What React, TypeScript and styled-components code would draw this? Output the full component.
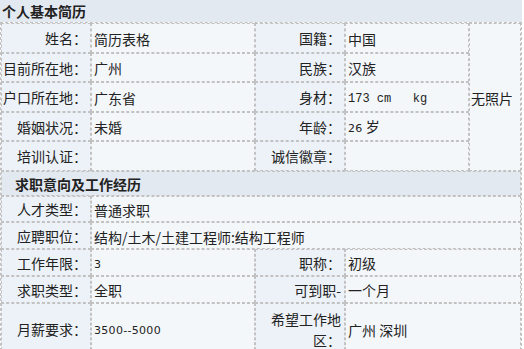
import styled, { createGlobalStyle } from 'styled-components'

const GlobalStyle = createGlobalStyle`
  html, body {
    margin: 0;
    padding: 0;
    background: #fff;
  }
  body {
    font-family: "Noto Sans CJK SC", "Noto Sans", sans-serif;
    font-size: 14px;
    color: #222;
  }
`

const LINE = '#c2c2c2'
const HEAD_BG = '#e3e9f1'
const LABEL_BG = '#edf2f8'
const VALUE_BG = '#f4f7fa'

const StyledPage = styled.div`
  width: 522px;
`
const StyledTitle = styled.div`
  height: 22px;
  line-height: 22px;
  padding-left: 2px;
  background: ${HEAD_BG};
  font-weight: bold;
`
const StyledSheet = styled.table`
  width: 522px;
  table-layout: fixed;
  border-collapse: separate;
  border-spacing: 0;
  border: 1px dashed ${LINE};
`
const StyledRow = styled.tr<{ $h: number }>`
  height: ${(p) => p.$h}px;
`
const StyledLabel = styled.td<{ $w?: number }>`
  box-sizing: border-box;
  width: ${(p) => (p.$w ? `${p.$w}px` : 'auto')};
  border: 1px dashed ${LINE};
  background: ${LABEL_BG};
  text-align: right;
  vertical-align: middle;
  padding: 2px 3px 0 0;
  line-height: 21px;
`
const StyledValue = styled.td<{ $w?: number }>`
  box-sizing: border-box;
  width: ${(p) => (p.$w ? `${p.$w}px` : 'auto')};
  border: 1px dashed ${LINE};
  background: ${VALUE_BG};
  text-align: left;
  vertical-align: middle;
  padding: 2px 2px 0;
  line-height: 20px;
  white-space: nowrap;
  overflow: hidden;
`
const StyledPhoto = styled(StyledValue)`
  padding-left: 1px;
`
const StyledSection = styled.td`
  border: 1px dashed ${LINE};
  background: ${HEAD_BG};
  font-weight: bold;
  padding: 1px 0 0 13px;
  line-height: 20px;
`
const StyledMono = styled.span`
  font-family: "Liberation Mono", monospace;
  font-size: 12px;
  white-space: pre;
`
const StyledNum = styled.span`
  font-family: "DejaVu Sans", sans-serif;
  font-size: 11px;
  letter-spacing: 0.3px;
`

const TOP = 29.5
const LOW = 26.7

export default function App() {
  return (
    <StyledPage>
      <GlobalStyle />
      <StyledTitle>个人基本简历</StyledTitle>
      <StyledSheet>
        <tbody>
          <StyledRow $h={TOP}>
            <StyledLabel $w={90}>姓名：</StyledLabel>
            <StyledValue $w={164}>简历表格</StyledValue>
            <StyledLabel $w={90}>国籍：</StyledLabel>
            <StyledValue $w={124}>中国</StyledValue>
            <StyledPhoto $w={52} rowSpan={5}>无照片</StyledPhoto>
          </StyledRow>
          <StyledRow $h={TOP}>
            <StyledLabel>目前所在地：</StyledLabel>
            <StyledValue>广州</StyledValue>
            <StyledLabel>民族：</StyledLabel>
            <StyledValue>汉族</StyledValue>
          </StyledRow>
          <StyledRow $h={TOP}>
            <StyledLabel>户口所在地：</StyledLabel>
            <StyledValue>广东省</StyledValue>
            <StyledLabel>身材：</StyledLabel>
            <StyledValue><StyledMono>173 cm   kg</StyledMono></StyledValue>
          </StyledRow>
          <StyledRow $h={TOP}>
            <StyledLabel>婚姻状况：</StyledLabel>
            <StyledValue>未婚</StyledValue>
            <StyledLabel>年龄：</StyledLabel>
            <StyledValue><StyledNum>26</StyledNum> 岁</StyledValue>
          </StyledRow>
          <StyledRow $h={TOP}>
            <StyledLabel>培训认证：</StyledLabel>
            <StyledValue></StyledValue>
            <StyledLabel>诚信徽章：</StyledLabel>
            <StyledValue></StyledValue>
          </StyledRow>
          <StyledRow $h={25}>
            <StyledSection colSpan={5}>求职意向及工作经历</StyledSection>
          </StyledRow>
          <StyledRow $h={LOW}>
            <StyledLabel>人才类型：</StyledLabel>
            <StyledValue colSpan={4}>普通求职</StyledValue>
          </StyledRow>
          <StyledRow $h={LOW}>
            <StyledLabel>应聘职位：</StyledLabel>
            <StyledValue colSpan={4}>结构/土木/土建工程师:结构工程师</StyledValue>
          </StyledRow>
          <StyledRow $h={LOW}>
            <StyledLabel>工作年限：</StyledLabel>
            <StyledValue><StyledNum>3</StyledNum></StyledValue>
            <StyledLabel>职称：</StyledLabel>
            <StyledValue colSpan={2}>初级</StyledValue>
          </StyledRow>
          <StyledRow $h={LOW}>
            <StyledLabel>求职类型：</StyledLabel>
            <StyledValue>全职</StyledValue>
            <StyledLabel>可到职-</StyledLabel>
            <StyledValue colSpan={2}>一个月</StyledValue>
          </StyledRow>
          <StyledRow $h={52}>
            <StyledLabel>月薪要求：</StyledLabel>
            <StyledValue><StyledNum>3500--5000</StyledNum></StyledValue>
            <StyledLabel>希望工作地区：</StyledLabel>
            <StyledValue colSpan={2}>广州 深圳</StyledValue>
          </StyledRow>
        </tbody>
      </StyledSheet>
    </StyledPage>
  )
}
